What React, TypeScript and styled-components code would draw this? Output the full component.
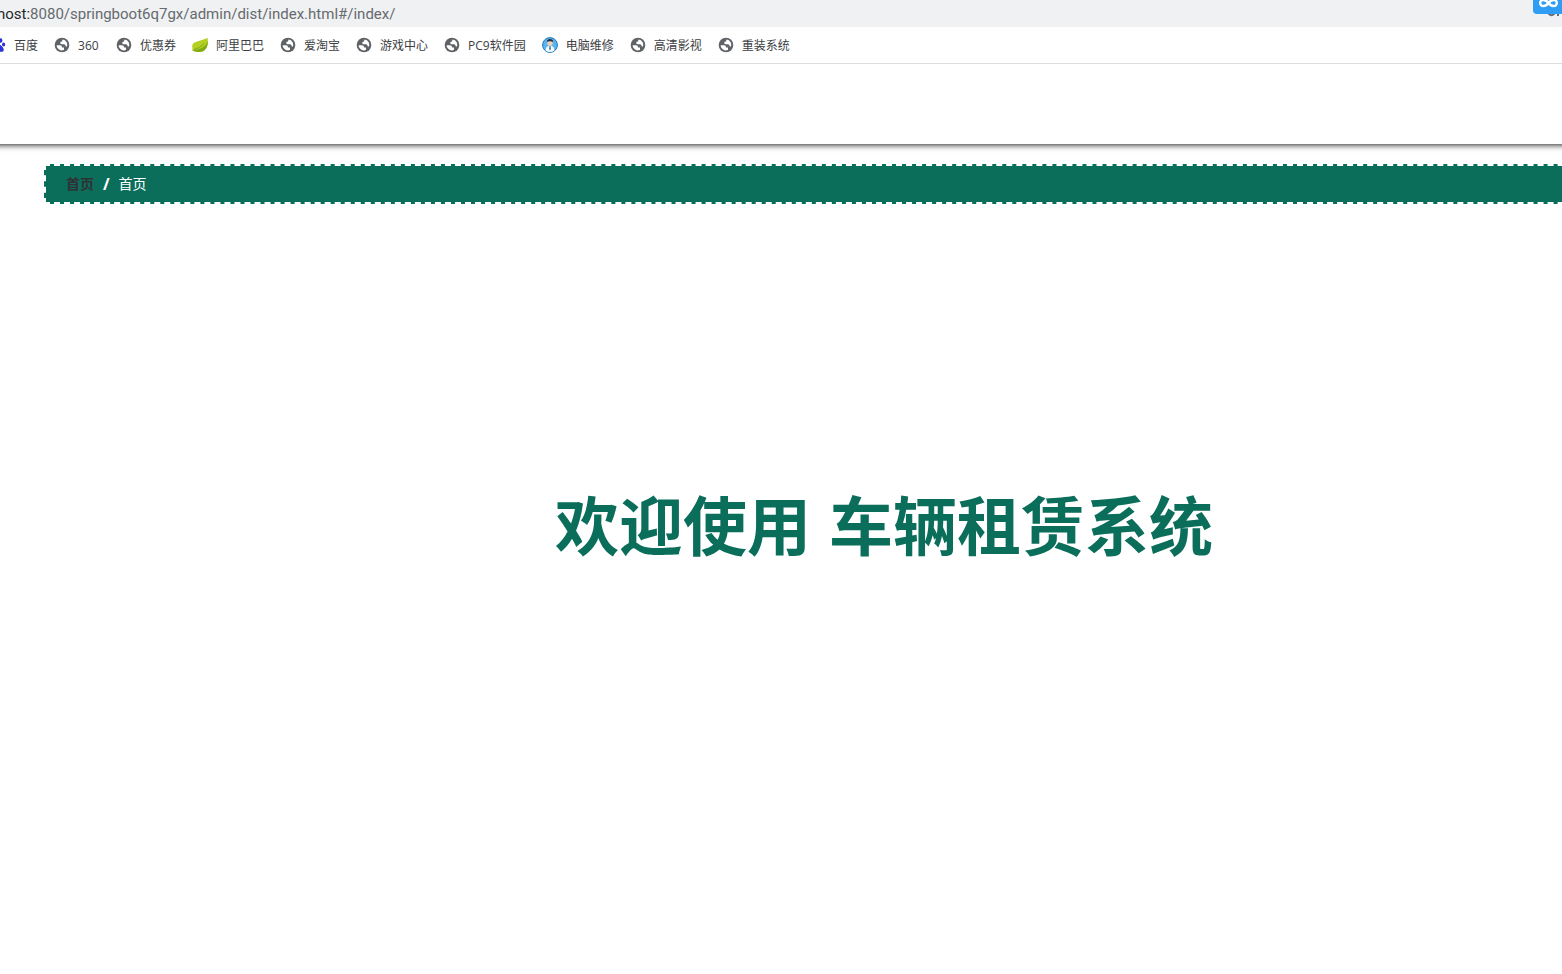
import React from "react";
import styled, { createGlobalStyle } from "styled-components";

const GlobalStyle = createGlobalStyle`
  *, *::before, *::after { box-sizing: border-box; }
  body { margin: 0; background: #fff; font-family: "Open Sans", "Noto Sans CJK SC", sans-serif; }
`;

const Page = styled.div`
  display: flex;
  flex-direction: column;
  min-height: 100vh;
  overflow: hidden;
`;

const AddressBar = styled.div`
  display: flex;
  align-items: center;
  justify-content: space-between;
  height: 27px;
  background: #f0f1f3;
  overflow: hidden;
`;

const Url = styled.div`
  margin-left: -3px;
  font-family: Roboto, "Open Sans", sans-serif;
  font-size: 15px;
  line-height: 26px;
  color: #666a6e;
  white-space: nowrap;
`;

const Host = styled.span`
  color: #25282b;
`;

const SyncButton = styled.button`
  display: flex;
  align-self: flex-start;
  padding: 0;
  border: 0;
  background: none;
`;

const Bookmarks = styled.nav`
  position: relative;
  z-index: 1;
  display: flex;
  align-items: center;
  gap: 16px;
  height: 37px;
  background: #fff;
  border-bottom: 1px solid #dcdddf;
`;

const Bookmark = styled.a`
  display: flex;
  align-items: center;
  gap: 8px;
  flex: none;
  font-size: 12px;
  line-height: 18px;
  color: #3c4043;
  text-decoration: none;
  white-space: nowrap;
  &:first-child { margin-left: -10px; }
`;

const BookmarkLabel = styled.span`
  min-width: 22px;
  padding-top: 2px;
`;

const Icon = styled.svg`
  display: block;
  flex: none;
  width: 16px;
  height: 16px;
`;

const Header = styled.header`
  height: 80px;
  margin: 0 -10px;
  box-shadow: 0 1px 6px #222;
`;

const Main = styled.main`
  display: flex;
  flex-direction: column;
  margin: 20px -162px 0 44px;
`;

const Breadcrumb = styled.nav`
  display: flex;
  align-items: center;
  gap: 9px;
  height: 40px;
  padding: 0 20px;
  border: 2px dashed #fff;
  background: #0b6e5b;
  font-size: 14px;
  line-height: 20px;
  color: #fff;
`;

const HomeLink = styled.a`
  color: #303133;
  font-weight: 700;
  text-decoration: none;
`;

const Separator = styled.span`
  font-size: 16px;
  font-weight: 700;
`;

const Welcome = styled.h1`
  margin: 278px 0 0;
  font-family: "Liberation Sans", "Noto Sans CJK SC", sans-serif;
  font-size: 64px;
  line-height: 92px;
  font-weight: 700;
  text-align: center;
  color: #0b6e5b;
`;

const Globe = () => (
  <Icon viewBox="0 0 16 16" aria-hidden="true">
    <circle cx="8" cy="8" r="7.3" fill="#5f6368" />
    <path fill="#fff" d="M2.6 8.2H6.2Q8 8.4 8 10V10.6H10V12.8Q9 13.4 7.8 13.4A5.4 5.4 0 0 1 2.6 8.2ZM8.5 2.6Q11.3 2.8 12.8 5.6Q13.6 7.8 12.9 9.6L11.6 9.4V8.4Q11.3 7.4 10 7.2H7.8Q6 6.8 6.2 5.4Q6.8 4.6 8 4.6Z" />
  </Icon>
);

const Paw = () => (
  <Icon viewBox="0 0 16 16" aria-hidden="true" fill="#2b32dc">
    <ellipse cx="5.5" cy="3.5" rx="1.8" ry="2.5" />
    <ellipse cx="10.6" cy="3.5" rx="1.8" ry="2.3" />
    <ellipse cx="2" cy="7.5" rx="1.7" ry="2.2" />
    <ellipse cx="13.6" cy="7.4" rx="1.6" ry="2" />
    <path d="M8 7C10 7 13.8 10.5 13.8 12.7S11.5 15 8 14.6S2.2 15 2.2 12.7S6 7 8 7Z" />
  </Icon>
);

const Leaf = () => (
  <Icon viewBox="0 0 16 16" aria-hidden="true">
    <path fill="#b5cf22" d="M15.6 1C16.4 7 15.5 14.8 7 15C4 15 2 14.2 0 13.6C1 13 .2 11 .2 9C.8 4 8 4.4 15.6 1Z" />
    <path fill="#7faa16" d="M15.8 4C16 10 13.5 15 7 15C4 15 2 14.2 0 13.6C7 13.2 13.5 10.5 15.8 4Z" />
    <path fill="none" stroke="#7faa16" d="M1.5 12.8Q8 11.5 12 6.5" />
  </Icon>
);

const Technician = () => (
  <Icon viewBox="0 0 16 16" aria-hidden="true">
    <circle cx="8" cy="8" r="7.4" fill="#5ab4ef" stroke="#1f78b8" />
    <path fill="#f5f9fc" d="M3.6 13.5Q3.6 9.5 6.5 9H9.5Q12.4 9.5 12.4 13.5Q8 16.5 3.6 13.5Z" />
    <circle cx="8" cy="6.2" r="2.6" fill="#f4d1b5" />
    <path fill="#27313d" d="M4.8 4.8Q5 2 8 2T11.2 4.8Q8 3.8 4.8 4.8Z" />
    <path fill="#3d7fae" d="M7.5 9H8.5L9 12L8 13.2L7 12Z" />
  </Icon>
);

const bookmarks = [
  { label: "百度", icon: Paw },
  { label: "360", icon: Globe },
  { label: "优惠券", icon: Globe },
  { label: "阿里巴巴", icon: Leaf },
  { label: "爱淘宝", icon: Globe },
  { label: "游戏中心", icon: Globe },
  { label: "PC9软件园", icon: Globe },
  { label: "电脑维修", icon: Technician },
  { label: "高清影视", icon: Globe },
  { label: "重装系统", icon: Globe },
];

export default function App() {
  return (
    <Page>
      <GlobalStyle />
      <AddressBar>
        <Url><Host>host:</Host>8080/springboot6q7gx/admin/dist/index.html#/index/</Url>
        <SyncButton aria-label="同步">
          <svg width="29" height="18" viewBox="0 0 29 18" aria-hidden="true">
            <path fill="none" stroke="#5f6b78" strokeWidth="2" d="M15 13Q18.500 17.500 22 13M25 12V16" />
            <path fill="#2f9df4" d="M0 0H29V14H4Q0 14 0 10Z" />
            <path fill="none" stroke="#fff" strokeWidth="2.4" d="M15.500 3C13 6.800 7.200 7.200 7.200 3S13 -.8 15.500 3S23.800 7.200 23.800 3S18 -.8 15.500 3Z" />
          </svg>
        </SyncButton>
      </AddressBar>
      <Bookmarks aria-label="书签">
        {bookmarks.map(({ label, icon: Mark }) => (
          <Bookmark key={label} href="#">
            <Mark />
            <BookmarkLabel>{label}</BookmarkLabel>
          </Bookmark>
        ))}
      </Bookmarks>
      <Header />
      <Main>
        <Breadcrumb aria-label="面包屑">
          <HomeLink href="#/index/">首页</HomeLink>
          <Separator>/</Separator>
          <span>首页</span>
        </Breadcrumb>
        <Welcome>欢迎使用 车辆租赁系统</Welcome>
      </Main>
    </Page>
  );
}
